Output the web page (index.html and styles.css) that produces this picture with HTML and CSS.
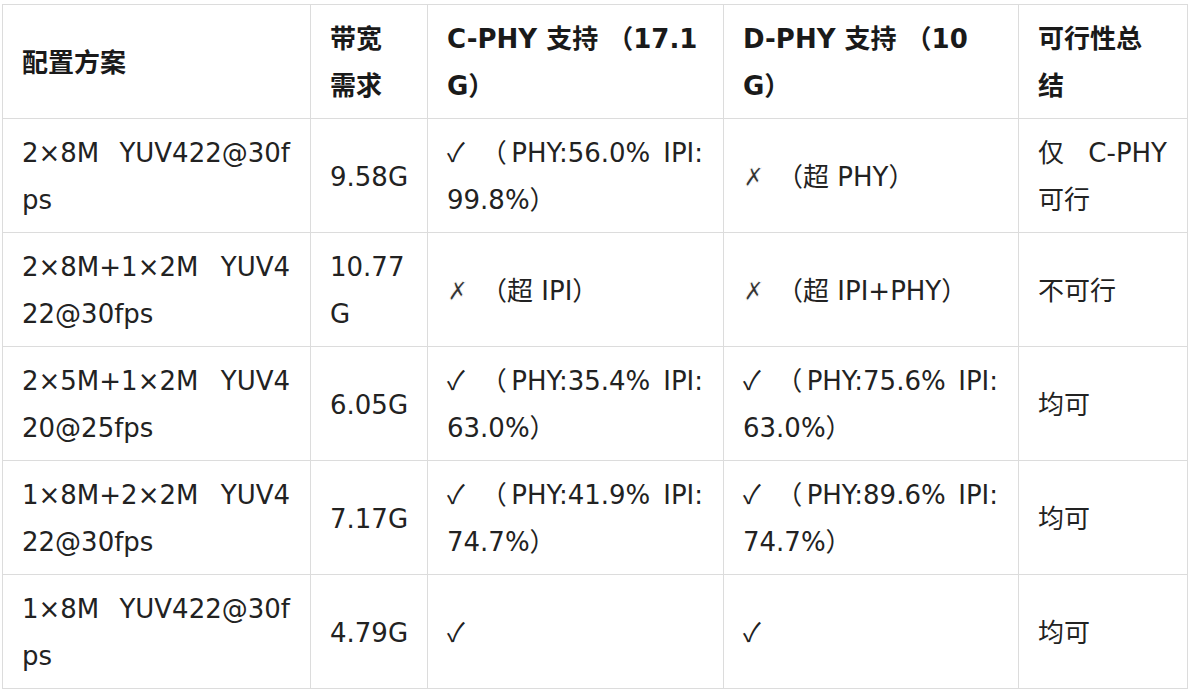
FILE: index.html
```html
<!DOCTYPE html>
<html lang="zh-CN">
<head>
<meta charset="utf-8">
<title>配置方案</title>
<link rel="stylesheet" href="styles.css">
</head>
<body>
<table class="grid">
  <colgroup>
    <col class="c1"><col class="c2"><col class="c3"><col class="c4"><col class="c5">
  </colgroup>
  <thead>
    <tr>
      <th>配置方案</th>
      <th>带宽需求</th>
      <th>C-PHY 支持 （17.1G）</th>
      <th>D-PHY 支持 （10G）</th>
      <th>可行性总结</th>
    </tr>
  </thead>
  <tbody>
    <tr>
      <td>2×8M YUV422@30fps</td>
      <td class="bw">9.58G</td>
      <td><span class="ok">✓</span> （PHY:56.0% IPI: 99.8%）</td>
      <td><span class="no">✗</span> （超 PHY）</td>
      <td>仅 C-PHY 可行</td>
    </tr>
    <tr>
      <td>2×8M+1×2M YUV422@30fps</td>
      <td class="bw">10.77G</td>
      <td><span class="no">✗</span> （超 IPI）</td>
      <td><span class="no">✗</span> （超 IPI+PHY）</td>
      <td>不可行</td>
    </tr>
    <tr>
      <td>2×5M+1×2M YUV420@25fps</td>
      <td class="bw">6.05G</td>
      <td><span class="ok">✓</span> （PHY:35.4% IPI: 63.0%）</td>
      <td><span class="ok">✓</span> （PHY:75.6% IPI: 63.0%）</td>
      <td>均可</td>
    </tr>
    <tr>
      <td>1×8M+2×2M YUV422@30fps</td>
      <td class="bw">7.17G</td>
      <td><span class="ok">✓</span> （PHY:41.9% IPI: 74.7%）</td>
      <td><span class="ok">✓</span> （PHY:89.6% IPI: 74.7%）</td>
      <td>均可</td>
    </tr>
    <tr>
      <td>1×8M YUV422@30fps</td>
      <td class="bw">4.79G</td>
      <td><span class="ok">✓</span></td>
      <td><span class="ok">✓</span></td>
      <td>均可</td>
    </tr>
  </tbody>
</table>
</body>
</html>
```

FILE: styles.css
```css
html, body {
  margin: 0;
  padding: 0;
  background: #ffffff;
}

body {
  padding: 4px 0 0 2px;
  font-family: "DejaVu Sans", "Noto Sans CJK SC", sans-serif;
  font-size: 26px;
  line-height: 47px;
  color: #222222;
}

.grid {
  border-collapse: collapse;
  table-layout: fixed;
  width: 1185px;
}

.c1 { width: 308px; }
.c2 { width: 117px; }
.c3 { width: 296px; }
.c4 { width: 295px; }
.c5 { width: 169px; }

.grid th,
.grid td {
  border: 1px solid #dcdcdc;
  padding: 11px 20px 8px 19px;
  vertical-align: middle;
  word-break: break-all;
}

.grid td {
  text-align: justify;
}

.grid th {
  text-align: left;
  font-weight: 700;
  color: #1a1a1a;
}

.grid td.bw {
  padding-right: 16px;
}

.ok,
.no {
  display: inline-block;
  line-height: 1;
  vertical-align: baseline;
}

.ok {
  font-family: "Noto Sans CJK SC", sans-serif;
  margin-right: 3px;
}

.no {
  font-family: "Noto Sans CJK SC", "DejaVu Sans", sans-serif;
  -webkit-text-stroke: 0.9px #ffffff;
  color: #333333;
  margin-right: 4px;
}
```
